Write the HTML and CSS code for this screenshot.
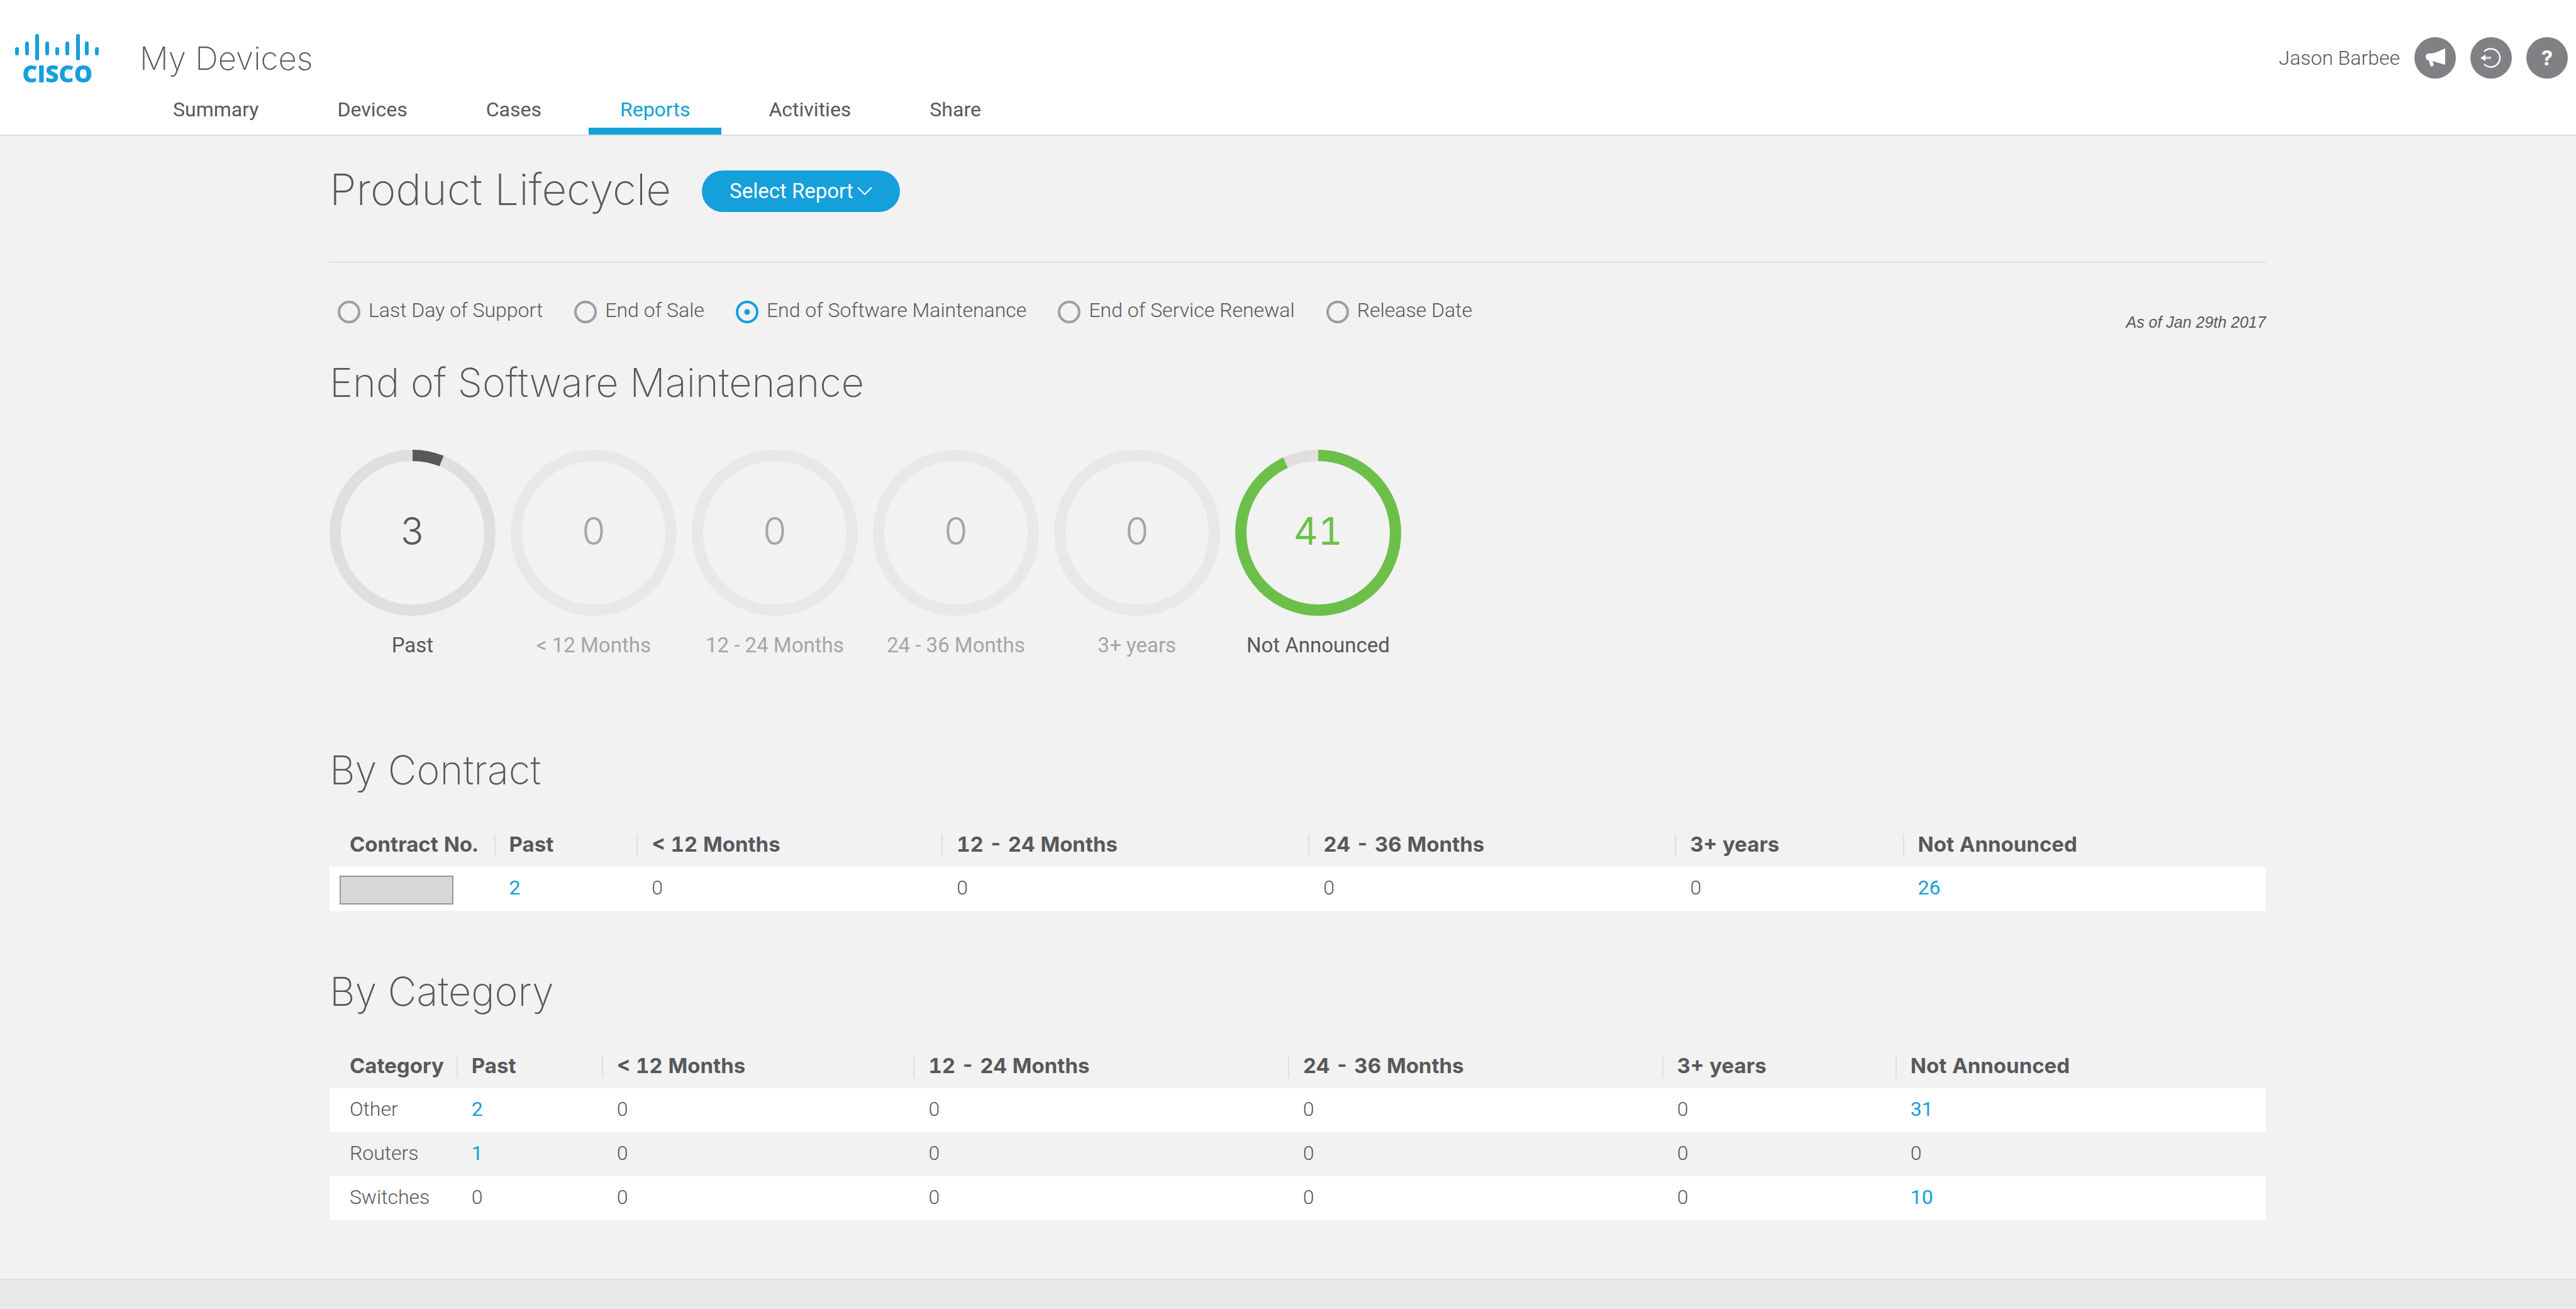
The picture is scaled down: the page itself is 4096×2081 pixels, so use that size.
FILE: index.html
```html
<!DOCTYPE html>
<html lang="en">
<head>
<meta charset="utf-8">
<title>My Devices - Product Lifecycle</title>
<link rel="stylesheet" href="styles.css">
</head>
<body>
<header class="site-header">
  <a class="brand" href="#" aria-label="Cisco home">
    <svg class="brand-bars" viewBox="0 0 136 42" aria-hidden="true">
      <g stroke="currentColor" stroke-width="6" stroke-linecap="round">
        <path d="M4 24v7M20 15v16M36 3v36M52 15v16M68 24v7M84 15v16M101 3v36M115 15v16M131 24v7"/>
      </g>
    </svg>
    <span class="brand-name">CISCO</span>
  </a>
  <div class="header-main">
    <div class="app-name">My Devices</div>
    <nav class="tabs" aria-label="Main">
      <a class="tab" href="#">Summary</a>
      <a class="tab" href="#">Devices</a>
      <a class="tab" href="#">Cases</a>
      <a class="tab tab-active" href="#" aria-current="page">Reports</a>
      <a class="tab" href="#">Activities</a>
      <a class="tab" href="#">Share</a>
    </nav>
  </div>
  <div class="user-bar">
    <span class="user-name">Jason Barbee</span>
    <button class="round-button" type="button" aria-label="Announcements">
      <svg viewBox="0 0 66 66" aria-hidden="true"><path fill="#fff" d="M49 18v26l-20-6 2 7-5 2-3-10c-3 0-5-3-5-6s2-5 6-5c10 0 17-5 25-8z"/></svg>
    </button>
    <button class="round-button" type="button" aria-label="Log out">
      <svg viewBox="0 0 66 66" aria-hidden="true"><path fill="none" stroke="#fff" stroke-width="2.5" d="M22 23a14.5 14.5 0 1 1 0 20"/><path stroke="#d0d0d2" stroke-width="4" d="M21 33h12"/><path fill="#fff" d="M16 33l8-5v10z"/></svg>
    </button>
    <button class="round-button" type="button" aria-label="Help">?</button>
  </div>
</header>

<main class="page">
  <div class="title-row">
    <h1 class="page-title">Product Lifecycle</h1>
    <button class="select-report" type="button">Select Report
      <svg class="chevron" viewBox="0 0 24 14" aria-hidden="true"><path fill="none" stroke="currentColor" stroke-width="2" d="M1 1l11 11L23 1"/></svg>
    </button>
  </div>

  <div class="filter-row">
    <div class="filters" role="radiogroup" aria-label="Milestone">
      <label class="filter"><input type="radio" name="milestone">Last Day of Support</label>
      <label class="filter"><input type="radio" name="milestone">End of Sale</label>
      <label class="filter"><input type="radio" name="milestone" checked>End of Software Maintenance</label>
      <label class="filter"><input type="radio" name="milestone">End of Service Renewal</label>
      <label class="filter"><input type="radio" name="milestone">Release Date</label>
    </div>
    <span class="as-of">As of Jan 29th 2017</span>
  </div>

  <h2 class="section-title">End of Software Maintenance</h2>
  <div class="donuts">
    <figure class="donut">
      <div class="ring"><svg viewBox="0 0 264 264" aria-hidden="true"><circle class="track" cx="132" cy="132" r="123"/><circle class="arc arc-past" cx="132" cy="132" r="123" pathLength="360" stroke-dasharray="22 360"/></svg><span>3</span></div>
      <figcaption>Past</figcaption>
    </figure>
    <figure class="donut donut-empty">
      <div class="ring"><svg viewBox="0 0 264 264" aria-hidden="true"><circle class="track" cx="132" cy="132" r="123"/></svg><span>0</span></div>
      <figcaption>&lt; 12 Months</figcaption>
    </figure>
    <figure class="donut donut-empty">
      <div class="ring"><svg viewBox="0 0 264 264" aria-hidden="true"><circle class="track" cx="132" cy="132" r="123"/></svg><span>0</span></div>
      <figcaption>12 - 24 Months</figcaption>
    </figure>
    <figure class="donut donut-empty">
      <div class="ring"><svg viewBox="0 0 264 264" aria-hidden="true"><circle class="track" cx="132" cy="132" r="123"/></svg><span>0</span></div>
      <figcaption>24 - 36 Months</figcaption>
    </figure>
    <figure class="donut donut-empty">
      <div class="ring"><svg viewBox="0 0 264 264" aria-hidden="true"><circle class="track" cx="132" cy="132" r="123"/></svg><span>0</span></div>
      <figcaption>3+ years</figcaption>
    </figure>
    <figure class="donut donut-selected">
      <div class="ring"><svg viewBox="0 0 264 264" aria-hidden="true"><circle class="track" cx="132" cy="132" r="123"/><circle class="arc arc-open" cx="132" cy="132" r="123" pathLength="360" stroke-dasharray="335 360"/></svg><span>41</span></div>
      <figcaption>Not Announced</figcaption>
    </figure>
  </div>

  <h2 class="section-title">By Contract</h2>
  <table class="data">
    <colgroup><col style="width:8.5%"><col style="width:7.36%"><col style="width:15.75%"><col style="width:18.94%"><col style="width:18.94%"><col style="width:11.76%"><col></colgroup>
    <thead>
      <tr><th><span>Contract No.</span></th><th><span>Past</span></th><th><span>&lt; 12 Months</span></th><th><span>12 - 24 Months</span></th><th><span>24 - 36 Months</span></th><th><span>3+ years</span></th><th><span>Not Announced</span></th></tr>
    </thead>
    <tbody>
      <tr><td class="masked-cell"><div class="masked"></div></td><td><a href="#">2</a></td><td>0</td><td>0</td><td>0</td><td>0</td><td><a href="#">26</a></td></tr>
    </tbody>
  </table>

  <h2 class="section-title">By Category</h2>
  <table class="data">
    <colgroup><col style="width:6.56%"><col style="width:7.5%"><col style="width:16.1%"><col style="width:19.33%"><col style="width:19.33%"><col style="width:12.05%"><col></colgroup>
    <thead>
      <tr><th><span>Category</span></th><th><span>Past</span></th><th><span>&lt; 12 Months</span></th><th><span>12 - 24 Months</span></th><th><span>24 - 36 Months</span></th><th><span>3+ years</span></th><th><span>Not Announced</span></th></tr>
    </thead>
    <tbody>
      <tr><td>Other</td><td><a href="#">2</a></td><td>0</td><td>0</td><td>0</td><td>0</td><td><a href="#">31</a></td></tr>
      <tr><td>Routers</td><td><a href="#">1</a></td><td>0</td><td>0</td><td>0</td><td>0</td><td>0</td></tr>
      <tr><td>Switches</td><td>0</td><td>0</td><td>0</td><td>0</td><td>0</td><td><a href="#">10</a></td></tr>
    </tbody>
  </table>
</main>
<footer class="site-footer"></footer>
</body>
</html>
```
FILE: styles.css
```css
* { box-sizing: border-box; }

body {
  margin: 0;
  min-height: 100vh;
  display: flex;
  flex-direction: column;
  background: #f2f2f2;
  color: #58585b;
  font-family: Roboto, "Liberation Sans", sans-serif;
  font-size: 32px;
  line-height: 40px;
}

a { color: #159fdb; text-decoration: none; }
button { border: 0; padding: 0; font: inherit; cursor: pointer; }

/* Header */
.site-header {
  display: flex;
  align-items: flex-start;
  height: 216px;
  padding: 0 13px 0 24px;
  background: #fff;
  border-bottom: 2px solid #dfdfdf;
}
.brand {
  display: flex;
  flex-direction: column;
  align-items: center;
  width: 134px;
  margin-top: 54px;
}
.brand-bars { display: block; width: 136px; height: 42px; }
.brand-name { font: 800 37px/42px "Open Sans", sans-serif; }
.header-main {
  display: flex;
  flex-direction: column;
  align-self: stretch;
  margin-left: 64px;
}
.app-name {
  margin-top: 61px;
  font-family: Inter, sans-serif;
  font-size: 51px;
  font-weight: 200;
  line-height: 64px;
}
.tabs { display: flex; gap: 25px; margin: auto 0 0 3px; }
.tab {
  height: 60px;
  padding: 0 50px;
  color: #58585b;
  border-bottom: 11px solid transparent;
}
.tab-active { color: #159fdb; border-bottom-color: #159fdb; }
.user-bar {
  display: flex;
  align-items: center;
  gap: 23px;
  margin: 59px 0 0 auto;
}
.user-name { font-weight: 300; }
.round-button {
  width: 66px;
  height: 66px;
  border-radius: 50%;
  background: #808184;
  color: #fff;
  font-family: Inter, sans-serif;
  font-weight: 700;
  font-size: 33px;
}
.round-button svg { display: block; }

/* Page */
.page { flex: 1; padding: 0 12.04% 93px 12.79%; }
.title-row {
  display: flex;
  align-items: center;
  gap: 49px;
  height: 202px;
  padding-bottom: 24px;
  border-bottom: 2px solid #dfdfdf;
}
.page-title {
  margin: 0;
  padding-bottom: 6px;
  font-family: Inter, sans-serif;
  font-size: 69px;
  font-weight: 200;
  line-height: 84px;
}
.select-report {
  display: flex;
  align-items: center;
  gap: 6px;
  height: 66px;
  padding: 0 44px;
  border-radius: 33px;
  background: #159fdb;
  color: #fff;
  font-size: 33px;
}
.chevron { width: 24px; height: 14px; }

.filter-row {
  display: flex;
  justify-content: space-between;
  align-items: flex-start;
  padding: 54px 0 0 13px;
}
.filters { display: flex; gap: 50px; }
.filter { display: flex; align-items: center; gap: 13px; font-weight: 300; }
.filter input {
  appearance: none;
  width: 36px;
  height: 36px;
  margin: 6px 0 0;
  border: 4px solid #9e9ea2;
  border-radius: 50%;
}
.filter input:checked {
  border-color: #159fdb;
  background: radial-gradient(circle, #159fdb 4px, transparent 5px);
}
.as-of { margin-top: 24px; font: italic 25px/32px "Liberation Sans", sans-serif; }

.section-title {
  margin: 0;
  font-family: Inter, sans-serif;
  font-size: 63px;
  font-weight: 200;
  line-height: 80px;
}
.filter-row + .section-title { margin-top: 40px; }

.donuts { display: flex; gap: 24px; margin: 67px 0 138px; }
.donut { width: 264px; margin: 0; text-align: center; white-space: nowrap; }
.ring { display: grid; place-items: center; height: 264px; }
.ring > * { grid-area: 1 / 1; }
.ring svg { width: 264px; height: 264px; transform: rotate(-90deg); }
.ring span {
  padding-bottom: 6px;
  font-family: Inter, sans-serif;
  font-size: 60px;
  font-weight: 300;
  font-variant-numeric: tabular-nums;
  line-height: 72px;
}
.track, .arc { fill: none; stroke-width: 18; stroke: #dfdfdf; }
.arc-past { stroke: #58585b; }
.arc-open { stroke: #6cc04a; }
.donut figcaption { margin-top: 27px; font-size: 33px; }
.donut-empty { color: #a5a5a6; }
.donut-empty .track { stroke: #e8e8e8; }
.donut-selected .ring span { color: #6cc04a; font-weight: 400; }

/* Tables */
.data {
  width: 100%;
  margin-top: 62px;
  border-collapse: collapse;
  table-layout: fixed;
  text-align: left;
}
.data + .section-title { margin-top: 88px; }
.data th {
  height: 52px;
  padding: 0 0 16px;
  font-family: Inter, sans-serif;
  font-size: 33px;
  font-weight: 700;
  font-variant-numeric: tabular-nums;
  vertical-align: top;
}
.data th span {
  display: block;
  height: 36px;
  padding-left: 22px;
  border-left: 2px solid #dfdfdf;
  line-height: 32px;
  white-space: nowrap;
}
.data th:first-child span { padding-left: 32px; border-left: 0; }
.data td { height: 70px; padding: 0 0 4px 24px; font-weight: 300; }
.data td a { font-weight: 400; }
.data td:first-child { padding-left: 32px; }
.data tbody tr:nth-child(odd) { background: #fff; }
.data td.masked-cell { padding: 4px 0 0 16px; }
.masked { width: 181px; height: 46px; background: #d8d8d8; border: 2px solid #979797; }

.site-footer { height: 48px; background: #e8e8e8; border-top: 2px solid #dfdfdf; }
```
